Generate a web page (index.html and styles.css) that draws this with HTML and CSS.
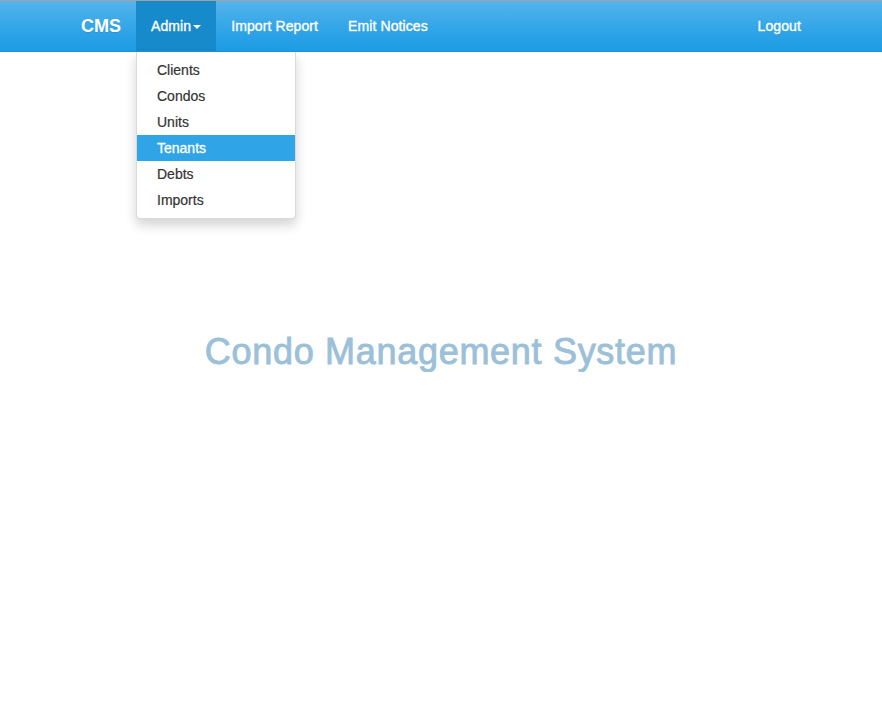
FILE: index.html
```html
<!DOCTYPE html>
<html>
<head>
<meta charset="utf-8">
<link rel="stylesheet" href="styles.css">
</head>
<body>
<nav class="navbar">
  <div class="container nav-inner">
    <a class="brand" href="#">CMS</a>
    <ul class="nav">
      <li class="dropdown open">
        <a class="nav-link active" href="#">Admin <span class="caret"></span></a>
        <ul class="dropdown-menu">
          <li><a href="#">Clients</a></li>
          <li><a href="#">Condos</a></li>
          <li><a href="#">Units</a></li>
          <li><a class="selected" href="#">Tenants</a></li>
          <li><a href="#">Debts</a></li>
          <li><a href="#">Imports</a></li>
        </ul>
      </li>
      <li><a class="nav-link" href="#">Import Report</a></li>
      <li><a class="nav-link" href="#">Emit Notices</a></li>
    </ul>
    <ul class="nav nav-right">
      <li><a class="nav-link" href="#">Logout</a></li>
    </ul>
  </div>
</nav>
<main class="container main">
  <h1 class="title">Condo Management System</h1>
</main>
</body>
</html>
```
FILE: styles.css
```css
* { box-sizing: border-box; }
html, body { margin: 0; padding: 0; }
body {
  font-family: "Liberation Sans", Arial, sans-serif;
  font-size: 14px;
  line-height: 20px;
  color: #555;
  background: #fff;
  border-top: 1px solid #a3a3a3;
}
a { text-decoration: none; }
.container { width: 750px; margin: 0 auto; padding: 0 15px; }
.navbar {
  height: 51px;
  background: linear-gradient(#54b4eb, #2fa4e7 60%, #1d9ce5);
  border-bottom: 1px solid #1995dc;
}
.nav-inner { display: flex; align-items: stretch; height: 50px; }
.brand {
  color: #fff;
  font-size: 18px;
  line-height: 20px;
  padding: 15px 15px;
  margin-left: -15px;
  font-weight: bold;
  text-shadow: 0 1px 0 rgba(0,0,0,0.1);
}
.nav { list-style: none; margin: 0; padding: 0; display: flex; }
.nav > li { position: relative; }
.nav-right { margin-left: auto; margin-right: -15px; }
.nav-link {
  display: block;
  color: #fff;
  padding: 15px 15px;
  line-height: 20px;
  height: 50px;
  letter-spacing: 0.1px;
  -webkit-text-stroke: 0.35px #fff;
  text-shadow: 0 1px 0 rgba(0,0,0,0.1);
}
.nav-link.active { background: #178acc; }
.caret {
  display: inline-block;
  width: 0; height: 0;
  margin-left: -2px;
  vertical-align: middle;
  border-top: 4px solid #fff;
  border-left: 4px solid transparent;
  border-right: 4px solid transparent;
}
.dropdown-menu {
  position: absolute;
  top: 51px;
  left: 0;
  min-width: 160px;
  margin: 0;
  padding: 5px 0;
  list-style: none;
  background: #fff;
  border: 1px solid rgba(0,0,0,0.15);
  border-top: 0;
  border-radius: 0 0 4px 4px;
  box-shadow: 0 6px 12px rgba(0,0,0,0.175);
  z-index: 10;
}
.dropdown-menu a {
  display: block;
  padding: 3px 20px;
  line-height: 20px;
  color: #333;
  white-space: nowrap;
  -webkit-text-stroke: 0.2px #333;
}
.dropdown-menu a.selected { background: #2fa4e7; color: #fff; -webkit-text-stroke: 0.3px #fff; }
.main { text-align: center; padding-top: 280px; }
.title {
  margin: 0;
  font-size: 36px;
  line-height: 40px;
  font-weight: normal;
  letter-spacing: 0.7px;
  -webkit-text-stroke: 0.9px #9bc0d8;
  color: #9bc0d8;
}
```
